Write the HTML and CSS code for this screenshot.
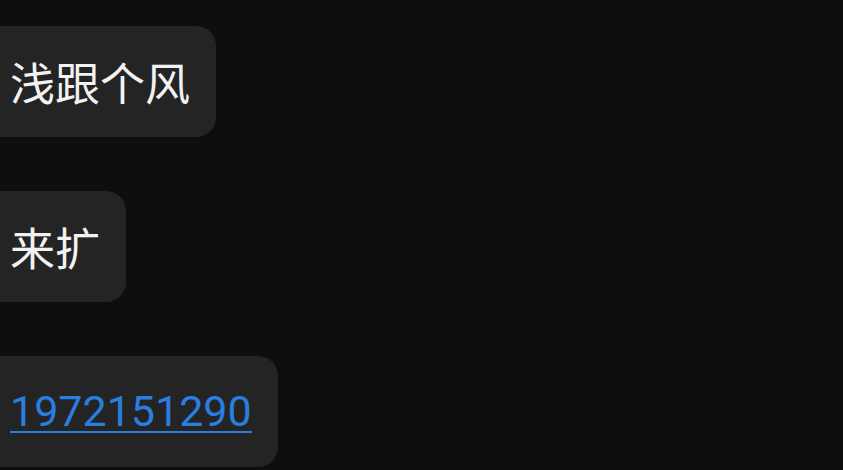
FILE: index.html
```html
<!DOCTYPE html>
<html lang="zh">
<head>
<meta charset="utf-8">
<link rel="stylesheet" href="styles.css">
</head>
<body>
<div class="chat">
  <div class="bubble">浅跟个风</div>
  <div class="bubble">来扩</div>
  <div class="bubble"><a class="phone" href="#">1972151290</a></div>
</div>
</body>
</html>
```
FILE: styles.css
```css
html, body {
  margin: 0;
  padding: 0;
  background: #0e0e0e;
  height: 100%;
  overflow: hidden;
}
.chat {
  display: flex;
  flex-direction: column;
  align-items: flex-start;
  gap: 54px;
  padding-top: 26px;
  margin-left: -22px;
}
.bubble {
  box-sizing: border-box;
  height: 111px;
  display: flex;
  align-items: center;
  padding: 0 26px 0 32px;
  background: #232423;
  border-radius: 20px;
  color: #f2f2f2;
  font-family: "Noto Sans CJK SC", "Noto Sans", sans-serif;
  font-size: 45px;
  line-height: 1;
}
.phone {
  color: #2b7de0;
  font-family: Roboto, "Noto Sans", sans-serif;
  font-size: 43px;
  text-decoration: underline;
  text-decoration-thickness: 2px;
  text-underline-offset: 5px;
}
```
